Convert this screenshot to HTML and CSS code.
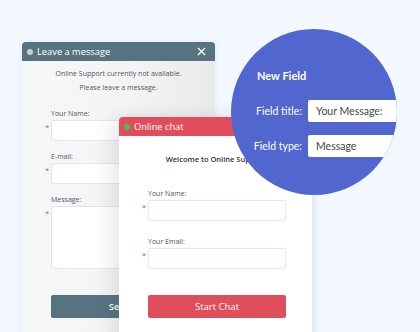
FILE: index.html
```html
<!DOCTYPE html>
<html lang="en">
<head>
  <meta charset="UTF-8">
  <title>Chat Forms</title>
  <link rel="stylesheet" href="styles.css">
</head>
<body>

  <div class="stage">

    <!-- Offline window -->
    <div class="window offline">
      <div class="win-head">
        <span class="dot"></span>
        <span class="win-title">Leave a message</span>
        <svg class="close" width="9" height="9" viewBox="0 0 9 9">
          <path d="M1 1 L8 8 M8 1 L1 8" stroke="#fff" stroke-width="1.4" fill="none"/>
        </svg>
      </div>
      <div class="win-body">
        <p class="note">Online Support currently not available.</p>
        <p class="note">Please leave a message.</p>

        <div class="field">
          <label>Your Name:</label>
          <div class="row"><span class="star">*</span><div class="input"></div></div>
        </div>
        <div class="field">
          <label>E-mail:</label>
          <div class="row"><span class="star">*</span><div class="input"></div></div>
        </div>
        <div class="field">
          <label>Message:</label>
          <div class="row"><span class="star">*</span><div class="input area"></div></div>
        </div>

        <div class="row btn-row"><span class="star"></span><div class="btn">Send</div></div>
      </div>
    </div>

    <!-- Online chat window -->
    <div class="window online">
      <div class="win-head">
        <span class="dot"></span>
        <span class="win-title">Online chat</span>
      </div>
      <div class="win-body">
        <p class="welcome">Welcome to Online Support</p>

        <div class="field">
          <label>Your Name:</label>
          <div class="row"><span class="star">*</span><div class="input"></div></div>
        </div>
        <div class="field">
          <label>Your Email:</label>
          <div class="row"><span class="star">*</span><div class="input"></div></div>
        </div>

        <div class="row btn-row"><span class="star"></span><div class="btn">Start Chat</div></div>
      </div>
    </div>

    <!-- Field editor bubble -->
    <div class="bubble">
      <h3>New Field</h3>
      <div class="prop">
        <span class="prop-label">Field title:</span>
        <span class="prop-input">Your Message:</span>
      </div>
      <div class="prop">
        <span class="prop-label">Field type:</span>
        <span class="prop-input">Message</span>
      </div>
    </div>

  </div>

</body>
</html>
```

FILE: styles.css
```css
/* Base */
body {
  margin: 0;
  background-color: #f3f7fe;
  font-family: "Open Sans", Arial, sans-serif;
  overflow: hidden;
}

.stage {
  position: relative;
  width: 420px;
  height: 332px;
  overflow: hidden;
}

/* Windows */
.window {
  position: absolute;
  width: 193px;
  border-radius: 4px 4px 0 0;
  overflow: hidden;
}

.offline {
  left: 22px;
  top: 42px;
  height: 300px;
  background: linear-gradient(90deg, #f6f7f8 0%, #f3f4f5 55%, #e8eaec 100%);
  box-shadow: 0 0 6px rgba(60, 80, 100, 0.08);
}

.online {
  left: 119px;
  top: 117px;
  height: 230px;
  background-color: #fff;
  box-shadow: -8px 0 18px rgba(40, 50, 70, 0.10), 3px 0 5px rgba(40, 50, 70, 0.06);
}

.win-head {
  display: flex;
  align-items: center;
  height: 19px;
  padding: 0 7px 0 5px;
  color: #fff;
}

.offline .win-head { background-color: #587380; }
.online .win-head { background-color: #e04e5c; }

.dot {
  width: 6px;
  height: 6px;
  border-radius: 50%;
  margin-right: 4px;
}

.offline .dot { background-color: #c9cfd3; }
.online .dot { background-color: #41c45a; }

.win-title {
  flex: 1;
  font-size: 9.3px;
  line-height: 19px;
}

.close {
  margin-right: 2px;
}

.win-body {
  padding: 6px 0 0 23px;
}

.note {
  margin: 0;
  padding-right: 23px;
  font-size: 7px;
  line-height: 14px;
  color: #555;
  text-align: center;
}

.welcome {
  margin: 10px 0 0;
  padding-right: 23px;
  font-size: 7.5px;
  font-weight: 600;
  line-height: 14px;
  color: #333;
  text-align: center;
}

/* Form fields */
.field label {
  display: block;
  margin-left: 6px;
  font-size: 7px;
  line-height: 12px;
  color: #555;
}

.offline .field { margin-top: 10px; }
.offline .field:first-of-type { margin-top: 13px; }
.online .field { margin-top: 15px; }
.online .field:first-of-type { margin-top: 22px; }

.row {
  display: flex;
  align-items: flex-start;
}

.star {
  width: 6px;
  color: #e5505e;
  font-size: 8px;
  line-height: 14px;
}

.input {
  width: 136px;
  height: 19px;
  background-color: #fff;
  border: 1px solid #e2e5e8;
  border-radius: 2px;
}

.online .input { border-color: #f7e4e8; }

.input.area { height: 61px; }

.btn-row { margin-top: 26px; }

.btn {
  width: 138px;
  height: 23px;
  border-radius: 2px;
  color: #fff;
  font-size: 9.5px;
  line-height: 23px;
  text-align: center;
}

.offline .btn { background-color: #587380; font-weight: 600; }
.online .btn { background-color: #e04e5c; }

/* Bubble */
.bubble {
  position: absolute;
  left: 231px;
  top: 29px;
  width: 166px;
  height: 166px;
  border-radius: 50%;
  background-color: #5266cf;
  overflow: hidden;
  font-family: Lato, "Open Sans", sans-serif;
  color: #fff;
}

.bubble h3 {
  margin: 40px 0 0 26px;
  font-size: 11px;
  font-weight: 700;
  line-height: 14px;
}

.prop {
  display: flex;
  align-items: center;
  gap: 6px;
  margin-top: 17px;
}

.prop + .prop { margin-top: 13px; }

.prop-label {
  flex: none;
  width: 71px;
  font-size: 10.5px;
  text-align: right;
}

.prop-input {
  flex: none;
  width: 100px;
  height: 22px;
  padding-left: 8px;
  background-color: #fff;
  border-radius: 2px;
  color: #444;
  font-size: 10.5px;
  line-height: 22px;
}
```
